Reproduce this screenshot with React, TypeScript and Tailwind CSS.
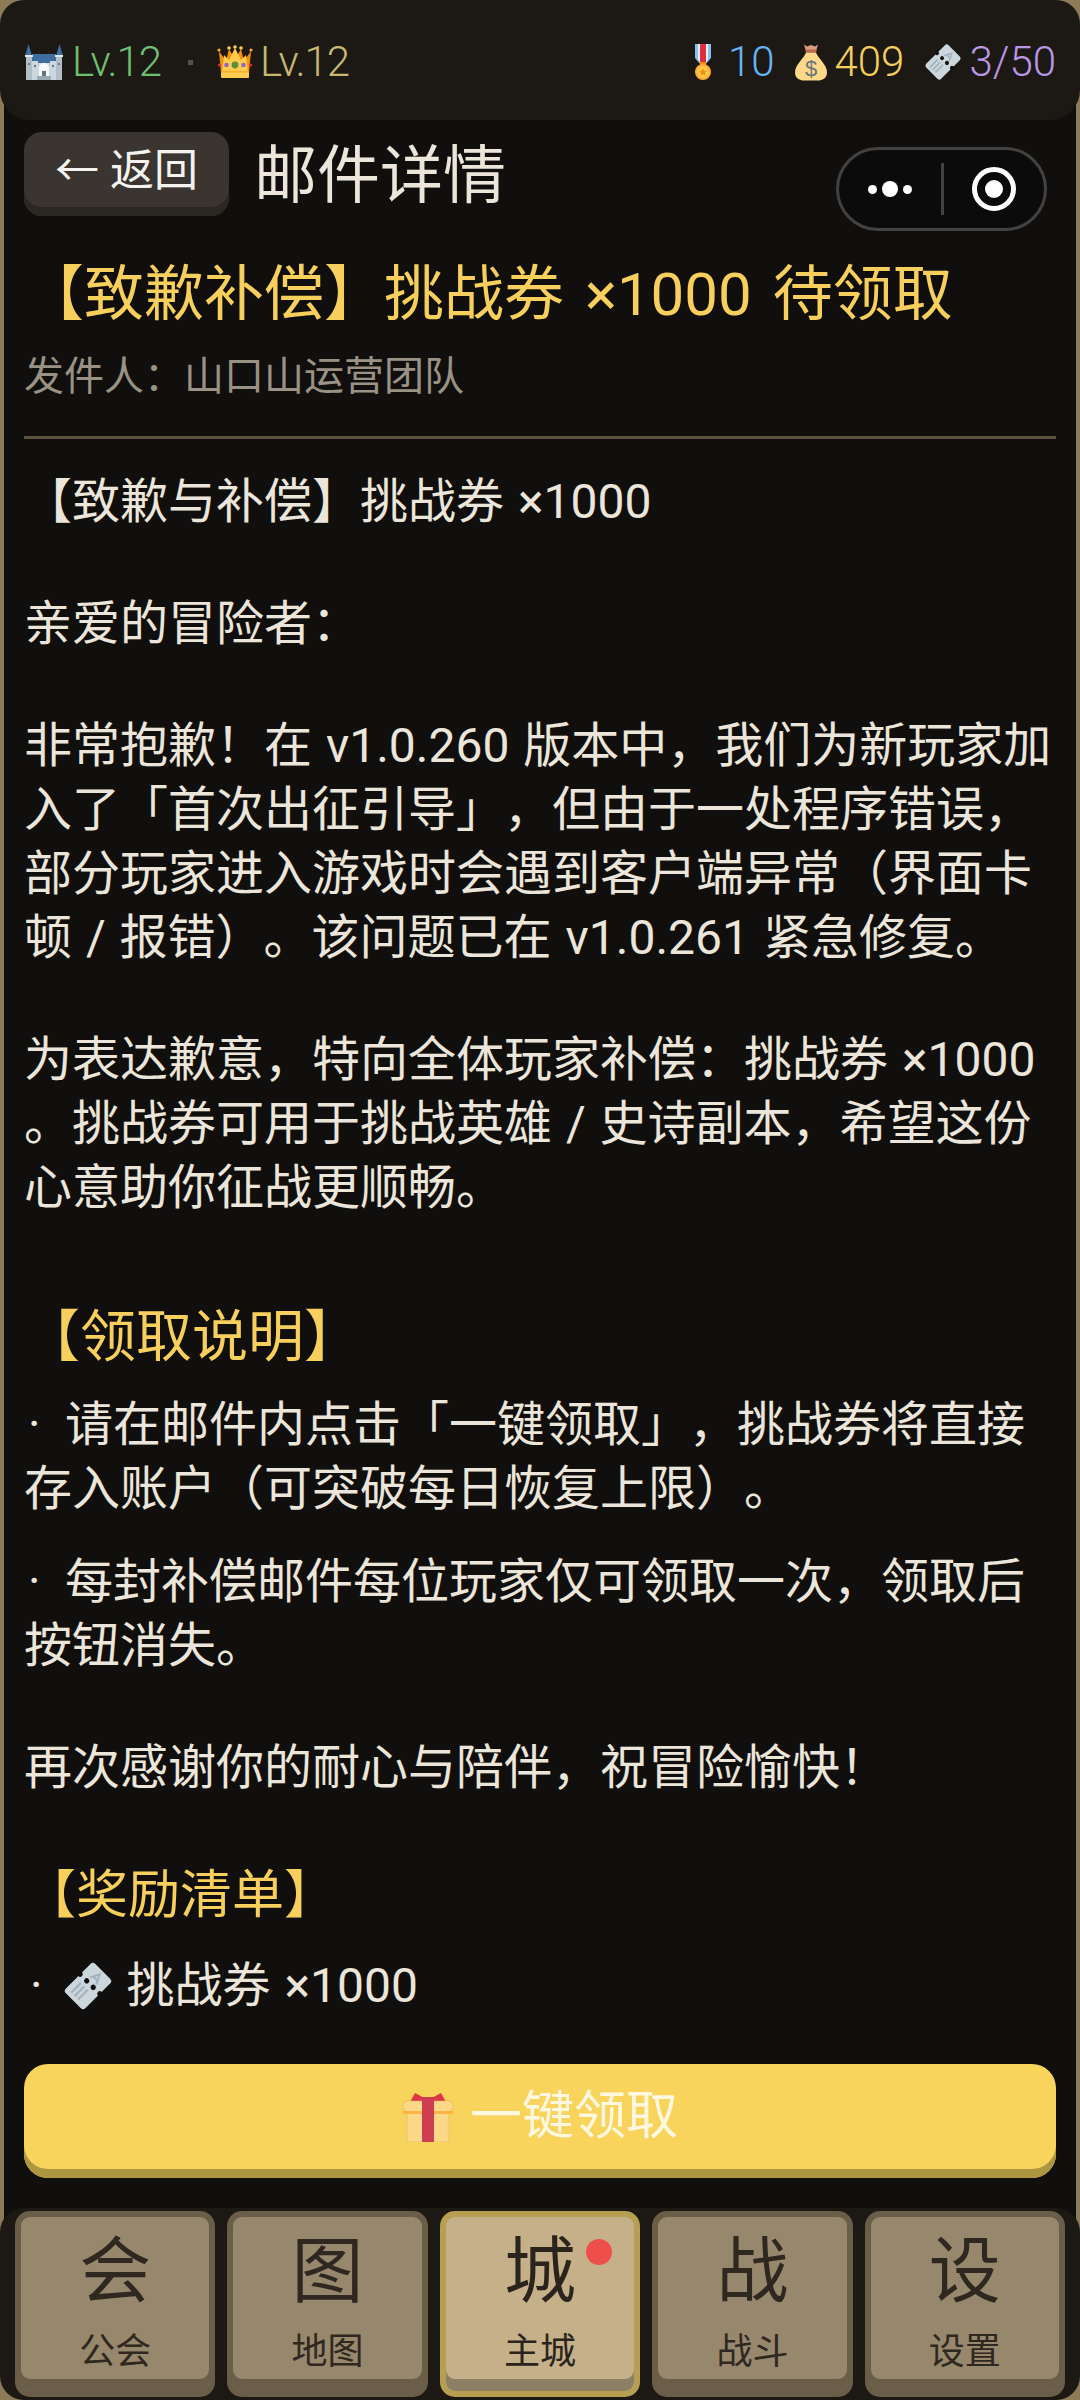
import React from "react";

const font = { fontFamily: '"Roboto", "Noto Sans CJK SC", sans-serif' };

function Castle() {
  return (
    <svg viewBox="0 0 38 36" className="w-[40px] h-[36px] shrink-0">
      <path d="M0 12 L3.5 0 L7 12Z M31 12 L34.5 0 L38 12Z" fill="#3f6d9e" />
      <path d="M7 10 H31 V17 H7Z" fill="#3f6d9e" />
      <rect x="1" y="13" width="6" height="23" fill="#b4bec8" />
      <rect x="31" y="13" width="6" height="23" fill="#b4bec8" />
      <rect x="7" y="17" width="24" height="19" fill="#ccd6dd" />
      <rect x="0" y="11" width="8" height="2" fill="#e1e8ed" />
      <rect x="30" y="11" width="8" height="2" fill="#e1e8ed" />
      <path d="M14 36 V24 a5 5 0 0 1 10 0 V36Z" fill="#f5f8fa" />
      <rect x="17" y="27" width="4" height="6" fill="#66757f" />
      <rect x="12" y="32" width="14" height="4" fill="#99aab5" />
      <rect x="13" y="17" width="12" height="2" fill="#3f6d9e" />
      <rect x="3" y="19" width="2" height="2" fill="#66757f" />
      <rect x="33" y="19" width="2" height="2" fill="#66757f" />
      <rect x="9" y="21" width="2" height="2" fill="#66757f" />
      <rect x="27" y="21" width="2" height="2" fill="#66757f" />
    </svg>
  );
}

function Crown() {
  return (
    <svg viewBox="0 0 36 34" className="w-[36px] h-[34px] shrink-0">
      <path d="M2 6 L9 16 L12 4 L18 14 L24 4 L27 16 L34 6 L32 28 H4Z" fill="#f4900c" />
      <path d="M18 3 L24 15 L29 10 L31 28 H5 L7 10 L12 15Z" fill="#ffcc4d" />
      <circle cx="2" cy="5" r="1.6" fill="#ffac33" />
      <circle cx="12" cy="3" r="1.8" fill="#ffcc4d" />
      <circle cx="18" cy="2" r="1.8" fill="#ffcc4d" />
      <circle cx="24" cy="3" r="1.8" fill="#ffcc4d" />
      <circle cx="34" cy="5" r="1.6" fill="#ffac33" />
      <rect x="4" y="27" width="28" height="6" rx="1" fill="#ffcc4d" />
      <rect x="4" y="26" width="28" height="1.5" fill="#ffac33" />
      <circle cx="18" cy="20" r="3.4" fill="#5c913b" />
      <circle cx="9.5" cy="20" r="2.3" fill="#9266cc" />
      <circle cx="26.5" cy="20" r="2.3" fill="#9266cc" />
      <circle cx="2.5" cy="20" r="1.6" fill="#dd2e44" />
      <circle cx="33.5" cy="20" r="1.6" fill="#dd2e44" />
    </svg>
  );
}

function Medal() {
  return (
    <svg viewBox="0 0 18 36" className="w-[18px] h-[38px] shrink-0">
      <path d="M1 0 H17 V14 L11 21 H7 L1 14Z" fill="#88c0ea" />
      <path d="M4 0 H14 V15 L11 21 H7 L4 15Z" fill="#e8eef3" />
      <path d="M6 0 H12 V19 H6Z" fill="#dd2e44" />
      <rect x="6" y="18" width="6" height="4" rx="1" fill="#f4900c" />
      <circle cx="9" cy="28" r="8" fill="#ffac33" />
      <circle cx="9" cy="28" r="5.8" fill="#ffcc4d" />
      <path d="M9 24 L10.2 26.8 L13 27 L10.9 28.9 L11.5 31.7 L9 30.2 L6.5 31.7 L7.1 28.9 L5 27 L7.8 26.8Z" fill="#f4900c" />
    </svg>
  );
}

function MoneyBag() {
  return (
    <svg viewBox="0 0 32 36" className="w-[32px] h-[37px] shrink-0">
      <path d="M9 0 L12 2 L16 0.5 L20 2 L23 0 L21 7 H11Z" fill="#d99e82" />
      <rect x="10.5" y="5" width="11" height="3" rx="1.5" fill="#c1694f" />
      <path d="M11 8 C9 14 0 20 0 28 C0 34 5 36 9 36 H23 C27 36 32 34 32 28 C32 20 23 14 21 8Z" fill="#fdd888" />
      <text x="16" y="31" textAnchor="middle" fontSize="22" fill="#67757f" fontFamily="Liberation Sans, sans-serif">$</text>
    </svg>
  );
}

function Ticket({ className }: { className: string }) {
  return (
    <svg viewBox="0 0 36 36" className={className}>
      <g transform="rotate(45 18 18)">
        <rect x="8" y="3" width="20" height="30" rx="2.5" fill="#ccd6dd" />
        <rect x="12" y="20" width="1.6" height="10" fill="#a4b2bd" />
        <rect x="15.5" y="20" width="1.6" height="10" fill="#a4b2bd" />
        <rect x="19" y="20" width="1.6" height="10" fill="#a4b2bd" />
        <path d="M14.5 13 L18 6 L21.5 13 M15.8 10.5 H20.2" stroke="#a4b2bd" strokeWidth="1.4" fill="none" />
        <circle cx="8" cy="16" r="1.9" fill="#100f0e" />
        <circle cx="14.7" cy="16" r="1.9" fill="#100f0e" />
        <circle cx="21.3" cy="16" r="1.9" fill="#100f0e" />
        <circle cx="28" cy="16" r="1.9" fill="#100f0e" />
      </g>
    </svg>
  );
}

function Gift() {
  return (
    <svg viewBox="0 0 50 50" className="w-[52px] h-[50px] shrink-0">
      <path d="M25 8 L12 1 L7 10 H43 L38 1Z" fill="#dd2e44" opacity="0.95" />
      <rect x="4" y="16" width="42" height="34" rx="3" fill="#fdd888" stroke="#e0b060" strokeWidth="0.5" />
      <rect x="0" y="9" width="50" height="11" rx="5.5" fill="#fdd888" stroke="#e0b060" strokeWidth="0.5" />
      <rect x="0" y="19" width="50" height="3" fill="#ffac33" opacity="0.8" />
      <rect x="19" y="5" width="12" height="45" fill="#cf3d50" />
    </svg>
  );
}

const tabs = [
  { big: "会", label: "公会" },
  { big: "图", label: "地图" },
  { big: "城", label: "主城", active: true },
  { big: "战", label: "战斗" },
  { big: "设", label: "设置" },
];

export default function App() {
  return (
    <div style={font} className="w-[1080px] h-[2400px] bg-[#8d7b58] overflow-hidden flex flex-col px-[4px] [text-spacing-trim:space-all]">
      <div className="h-[120px] -mx-[4px] px-[24px] bg-[#1c1914] rounded-[30px] rounded-t-[24px] flex items-start justify-between pt-[43px] shrink-0 relative z-10">
        <div className="flex items-center text-[42px] leading-[38px] font-light">
          <Castle />
          <span className="ml-[8px] text-[#6fbf73] tracking-[-1px]">Lv.12</span>
          <span className="ml-[27px] w-[5px] h-[5px] bg-[#55524e]" />
          <span className="ml-[24px]"><Crown /></span>
          <span className="ml-[7px] text-[#c9b872] tracking-[-1px]">Lv.12</span>
        </div>
        <div className="flex items-center text-[42px] leading-[38px] font-light">
          <Medal />
          <span className="ml-[16px] text-[#64b5f6]">10</span>
          <span className="ml-[20px]"><MoneyBag /></span>
          <span className="ml-[8px] text-[#f7cf5c]">409</span>
          <span className="ml-[20px]"><Ticket className="w-[38px] h-[38px] shrink-0" /></span>
          <span className="ml-[7px] text-[#b896e8]">3/50</span>
        </div>
      </div>

      <div className="-mt-[30px] pt-[30px] flex-1 bg-[#100f0e] flex flex-col min-h-0 rounded-b-[24px]">
        <div className="px-[20px] pt-[12px] flex items-start relative">
          <div className="w-[205px] h-[84px] rounded-[18px] bg-[#3a3530] shadow-[inset_0_-9px_0_#2b2824] flex items-center justify-center pb-[6px] text-[44px] text-[#f5f3ef] shrink-0">
            <span>← 返回</span>
          </div>
          <div className="ml-[25px] mt-[4px] text-[63px] leading-[80px] text-[#ebe5da]">邮件详情</div>
          <div className="absolute right-[29px] top-[27px] w-[211px] h-[84px] rounded-full border-[3px] border-[#444240] bg-[#0b0b0b] flex items-center">
            <div className="flex-1 flex items-center justify-center gap-[5px]">
              <span className="w-[9px] h-[9px] rounded-full bg-white" />
              <span className="w-[16px] h-[16px] rounded-full bg-white" />
              <span className="w-[9px] h-[9px] rounded-full bg-white" />
            </div>
            <div className="w-[3px] h-[52px] bg-[#444240]" />
            <div className="w-[100px] flex items-center justify-center">
              <div className="w-[44px] h-[44px] rounded-full border-[5px] border-white flex items-center justify-center">
                <span className="w-[18px] h-[18px] rounded-full bg-white" />
              </div>
            </div>
          </div>
        </div>

        <div className="px-[20px] mt-[44px] flex-1 min-h-0 overflow-hidden">
          <div className="text-[60px] leading-[70px] text-[#f7cf5c] [word-spacing:6px]">【致歉补偿】挑战券 ×1000 待领取</div>
          <div className="mt-[23px] text-[40px] leading-[48px] text-[#9a9284]">发件人：山口山运营团队</div>
          <div className="mt-[35px] h-[3px] bg-[#5c5040]" />
          <div className="mt-[31px] text-[48px] leading-[64px] text-[#ebe5da] [word-spacing:2px]">
            <p>【致歉与补偿】挑战券 ×1000</p>
            <p className="mt-[58px]">亲爱的冒险者：</p>
            <p className="mt-[58px]">非常抱歉！在 v1.0.260 版本中，我们为新玩家加入了「首次出征引导」，但由于一处程序错误，部分玩家进入游戏时会遇到客户端异常（界面卡顿 / 报错）。该问题已在 v1.0.261 紧急修复。</p>
            <p className="mt-[58px]">为表达歉意，特向全体玩家补偿：挑战券 ×1000 。挑战券可用于挑战英雄 / 史诗副本，希望这份心意助你征战更顺畅。</p>
            <h3 className="mt-[81px] text-[56px] leading-[72px] text-[#f7cf5c]">【领取说明】</h3>
            <p className="mt-[20px] indent-[4px]">·{"\u2002"}请在邮件内点击「一键领取」，挑战券将直接存入账户（可突破每日恢复上限）。</p>
            <p className="mt-[29px] indent-[4px]">·{"\u2002"}每封补偿邮件每位玩家仅可领取一次，领取后按钮消失。</p>
            <p className="mt-[58px]">再次感谢你的耐心与陪伴，祝冒险愉快！</p>
            <h3 className="mt-[60px] text-[52px] leading-[72px] text-[#f7cf5c]">【奖励清单】</h3>
            <div className="mt-[22px] flex items-center">
              <span className="ml-[6px] mr-[20px]">·</span>
              <Ticket className="w-[50px] h-[50px] shrink-0" />
              <span className="ml-[14px]">挑战券 ×1000</span>
            </div>
          </div>
        </div>

        <div className="px-[20px] shrink-0">
          <div className="h-[114px] rounded-[24px] bg-[#f8d45c] shadow-[inset_0_-9px_0_#ad9640] pb-[9px] flex items-center justify-center gap-[16px] text-[52px] text-[#fff8e0]">
            <Gift />
            <span>一键领取</span>
          </div>
        </div>

        <div className="-mx-[4px] mt-[30px] h-[192px] bg-[#1c1914] rounded-[24px] px-[15px] pt-[3px] grid grid-cols-5 gap-[12px] shrink-0">
          {tabs.map((t) => (
            <div
              key={t.label}
              className={
                t.active
                  ? "relative h-[186px] rounded-[15px] border-[6px] border-[#b69f50] bg-[#c6b08a] shadow-[inset_0_-12px_0_#8d7f64] flex flex-col items-center text-[#2a241c]"
                  : "relative h-[186px] rounded-[15px] border-[6px] border-[#6b5e49] bg-[#97876c] shadow-[inset_0_-12px_0_#6b5e49] flex flex-col items-center text-[#2f2820]"
              }
            >
              <span className="mt-[15px] text-[72px] leading-[80px]">{t.big}</span>
              <span className="mt-[20px] text-[36px] leading-[40px]">{t.label}</span>
              {t.active && <span className="absolute right-[22px] top-[22px] w-[26px] h-[26px] rounded-full bg-[#ef4f4a]" />}
            </div>
          ))}
        </div>
      </div>
    </div>
  );
}
